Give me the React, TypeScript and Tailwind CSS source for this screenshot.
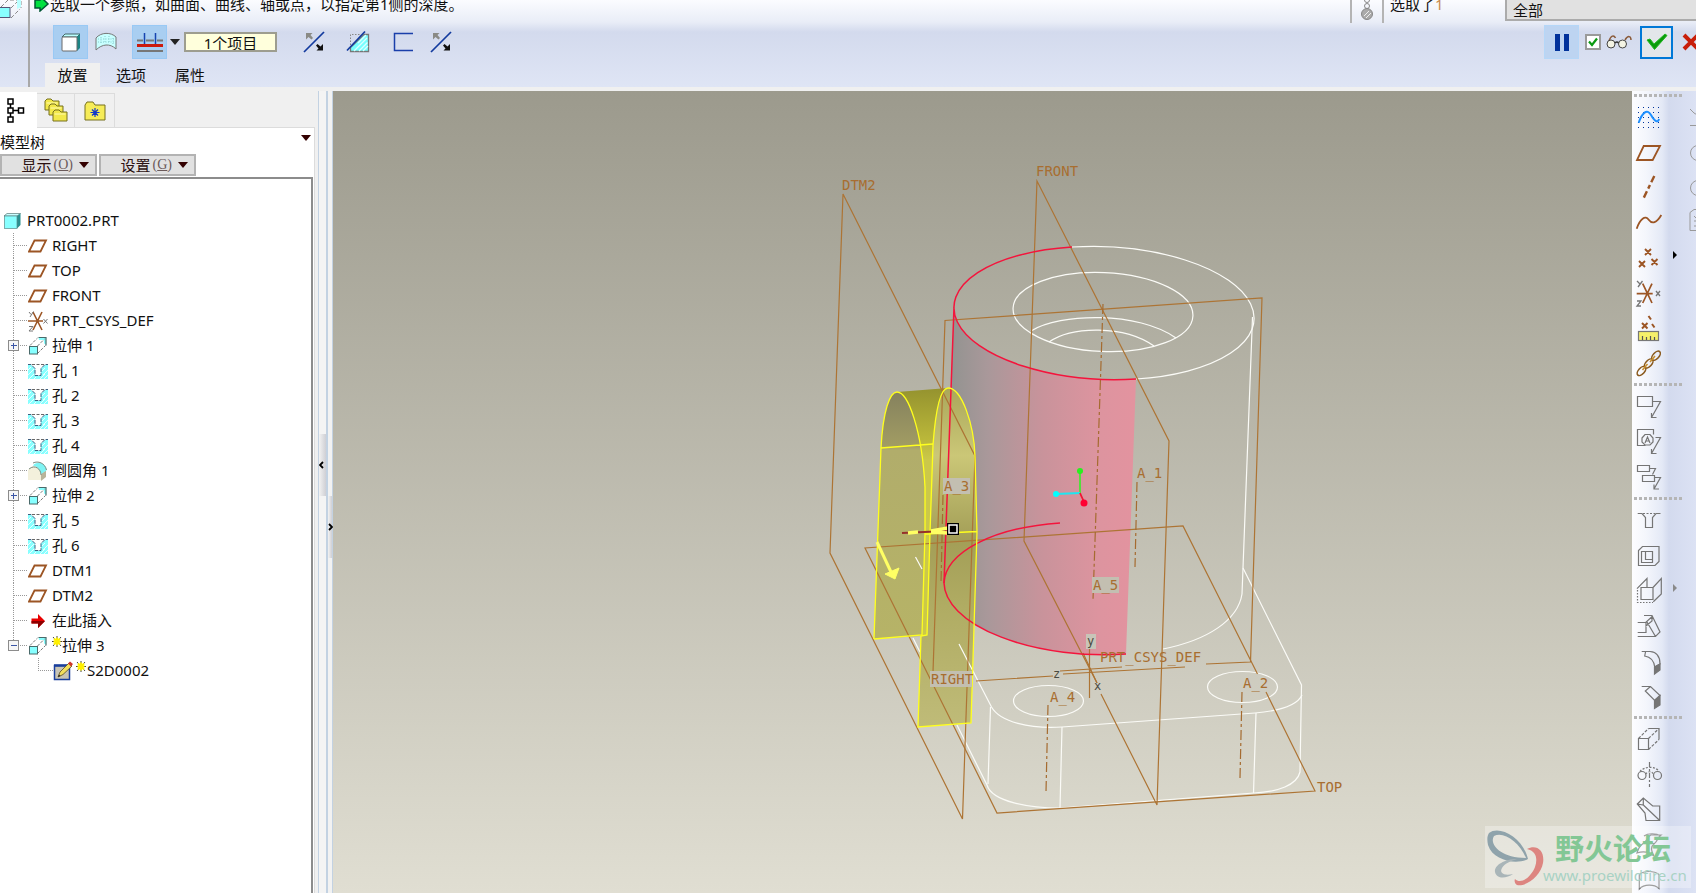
import type { ReactNode } from 'react';

const BROWN = '#9c5524';
const GRAY = '#757575';

type TreeItem = { icon: ReactNode; label: string; node?: 'plus' | 'minus'; fresh?: boolean };

/* ---------- tree icons ---------- */

function PlaneIcon() {
  return (
    <svg width="20" height="18" viewBox="0 0 20 18" fill="none">
      <path d="M6.500 3.500H18L12.500 14.500H1z" stroke={BROWN} strokeWidth="1.800" />
    </svg>
  );
}

function CsysIcon() {
  return (
    <svg width="20" height="22" viewBox="0 0 20 22" fill="none">
      <path d="M0 11H15M5 2L14 20M14 2L5 20" stroke={BROWN} strokeWidth="1.600" />
      <path d="M1 2l2 2.500M5.500 1.500L2 7M15.500 9l4 4.500M19.500 9l-4 4.500M1 16.500h4L1 21h4" stroke="#777" />
    </svg>
  );
}

function ExtrudeIcon() {
  return (
    <svg width="20" height="20" viewBox="0 0 20 20" fill="none">
      <path d="M10.500 1.500h7.500v7l-2-1V4h-5z" fill="#8ff" />
      <path d="M10.500 1.500h7.500v8" stroke="#4a6a6a" strokeWidth="1.200" />
      <path d="M2 9.500l7.500-7.500M9.500 17.500l8-8M9.500 10l7-7" stroke="#777" strokeDasharray="3 1.500" />
      <rect x="1.500" y="10.500" width="8" height="7.500" fill="#8ff" stroke="#4a6a6a" />
    </svg>
  );
}

function HoleIcon() {
  return (
    <svg width="20" height="16" viewBox="0 0 20 16" fill="none">
      <path d="M0 2h3l4 3.500V13h6V5.500L17 2h3v14H0z" fill="#8ff" />
      <path d="M0 7l3-3M0 12l6-6M1 16l6-6M6 16l2-2M12 16l5-5M16 16l4-4M14 8l3-3M15 12l5-5" stroke="#e8ffff" />
      <path d="M0 1.500h3l4 4V12.500h6V5.500l4-4h3" stroke="#3d5f80" strokeDasharray="4 1" />
      <path d="M4 1.500h12" stroke="#666" strokeDasharray="3 1.500" />
    </svg>
  );
}

function RoundIcon() {
  return (
    <svg width="20" height="20" viewBox="0 0 20 20" fill="none">
      <path d="M0 9l5-4c4 0 8 4 8 8v6H0z" fill="#f3f0dc" />
      <path d="M13 13l5-4v7l-5 4z" fill="#b9b49a" />
      <path d="M5 4.500C8 0 18 1 18.500 9.500L13 13C12 8 9 5.500 5 4.500z" fill="#7ff4f4" />
      <path d="M5 2C10-.5 17 2 18.500 9M1 8c6-5 12 0 12 6" stroke="#7a8a80" />
    </svg>
  );
}

function InsertIcon() {
  return (
    <svg width="20" height="16" viewBox="0 0 20 16">
      <path d="M3.500 5.500h6.500V1l7 7-7 7v-4.500H3.500z" fill="#e80000" />
      <path d="M3.500 8H17l-7 7v-4.500H3.500z" fill="#8d0000" />
    </svg>
  );
}

function SketchIcon() {
  return (
    <svg width="22" height="22" viewBox="0 0 22 22" fill="none">
      <rect x="1.500" y="5.500" width="15" height="14" fill="#c9c5b4" stroke="#1a3f9c" strokeWidth="1.500" />
      <path d="M1 5.500h16" stroke="#1a3f9c" strokeWidth="2.500" />
      <path d="M5 17l2-5 9-9 3 3-9 8.500z" fill="#f3e05c" stroke="#5a4a20" strokeWidth=".8" />
      <path d="M15 3.500l2-2 3 2.500-2 2.500z" fill="#d0362a" />
      <path d="M5 17l1-2.500 1.500 1.500z" fill="#222" />
    </svg>
  );
}

function PartIcon() {
  return (
    <svg width="17" height="16" viewBox="0 0 17 16">
      <path d="M0 3l3-2.500h13.500L13 3z" fill="#c9ffff" stroke="#5a7a7a" strokeWidth=".7" />
      <path d="M13 3l3.500-2.500V12L13 15.500z" fill="#2a8f8f" />
      <rect x=".5" y="3" width="12.500" height="12.500" fill="#8ff" stroke="#5a8a8a" strokeWidth=".7" />
    </svg>
  );
}

function Spark() {
  return (
    <svg width="10" height="11" viewBox="0 0 10 11" className="-mt-2 shrink-0">
      <path d="M5 0v11M0 5.500h10M1 1l8 9M9 1l-8 9" stroke="#444" />
      <path d="M5 1.500v8M1.500 5.500h7M2 2.500l6 6M8 2.500l-6 6" stroke="#fff000" strokeWidth="1.800" />
    </svg>
  );
}

const treeItems: TreeItem[] = [
  { icon: <PlaneIcon />, label: 'RIGHT' },
  { icon: <PlaneIcon />, label: 'TOP' },
  { icon: <PlaneIcon />, label: 'FRONT' },
  { icon: <CsysIcon />, label: 'PRT_CSYS_DEF' },
  { icon: <ExtrudeIcon />, label: '拉伸 1', node: 'plus' },
  { icon: <HoleIcon />, label: '孔 1' },
  { icon: <HoleIcon />, label: '孔 2' },
  { icon: <HoleIcon />, label: '孔 3' },
  { icon: <HoleIcon />, label: '孔 4' },
  { icon: <RoundIcon />, label: '倒圆角 1' },
  { icon: <ExtrudeIcon />, label: '拉伸 2', node: 'plus' },
  { icon: <HoleIcon />, label: '孔 5' },
  { icon: <HoleIcon />, label: '孔 6' },
  { icon: <PlaneIcon />, label: 'DTM1' },
  { icon: <PlaneIcon />, label: 'DTM2' },
  { icon: <InsertIcon />, label: '在此插入' },
  { icon: <ExtrudeIcon />, label: '拉伸 3', node: 'minus', fresh: true },
];

function Guide({ node, last }: { node?: 'plus' | 'minus'; last?: boolean }) {
  return (
    <svg width="28" height="25" viewBox="0 0 28 25" fill="none" className="shrink-0" shapeRendering="crispEdges">
      <path d={last ? 'M13.500 0V12' : 'M13.500 0V25'} stroke="#999" strokeDasharray="1 1" />
      <path d="M14 12.500H28" stroke="#999" strokeDasharray="1 1" />
      {node && (
        <>
          <rect x="8.500" y="7.500" width="10" height="10" rx="1" fill="#f6f6f6" stroke="#8c8c8c" />
          <path d={node === 'plus' ? 'M11 12.500h6M13.500 10v6' : 'M11 12.500h6'} stroke="#3a55a5" />
        </>
      )}
    </svg>
  );
}

/* ---------- right toolbar ---------- */

const dots = [4, 9, 14, 19, 24];

const datumTools: { name: string; art: ReactNode }[] = [
  {
    name: '草绘',
    art: (
      <>
        <g stroke="none" fill="#00329b" shapeRendering="crispEdges">
          {dots.map(x => dots.map(y => <rect key={`${x}-${y}`} x={x} y={y + 3} width="1" height="1" />))}
        </g>
        <path d="M4.700 22.700C8 13 13 8 17 15S24 23 25 19" stroke="#1e90ff" strokeWidth="2" />
      </>
    ),
  },
  { name: '平面', art: <path d="M9.700 11H26L18.700 25H3z" stroke={BROWN} strokeWidth="1.800" /> },
  { name: '轴', art: <path d="M20.300 6L8.700 30" stroke={BROWN} strokeWidth="2.400" strokeDasharray="7 3 4 3" /> },
  { name: '曲线', art: <path d="M2.700 23.700C6 13.700 11.300 10 14.700 14.700S22.700 18 27.300 10" stroke={BROWN} strokeWidth="1.800" /> },
  {
    name: '点',
    art: <path d="M11 9l6 6m0-6l-6 6M5 21l6 6m0-6l-6 6M17.500 19l6 6m0-6l-6 6" stroke={BROWN} strokeWidth="1.900" />,
  },
  {
    name: '坐标系',
    art: (
      <>
        <path d="M2.700 18.700h16M8.700 8.700l9.300 19.300M18 8.700L8.700 28" stroke={BROWN} strokeWidth="1.700" />
        <path d="M3 6l3 3M8.500 6L4 12M22 16l4 5M26 16l-4 5M3 26h4l-4 5h4" stroke={GRAY} strokeWidth="1.300" />
      </>
    ),
  },
  {
    name: '分析',
    art: (
      <>
        <path d="M8 13l5.500 5.500m0-5.500L8 18.500M14.500 6l2.500 3.500M18 14l2.500 3.500" stroke={BROWN} strokeWidth="2" />
        <rect x="4.500" y="21.500" width="20" height="9" fill="#f5f06a" stroke="#777" />
        <path d="M8.500 30v-4M12.500 30v-3M16.500 30v-4M20.500 30v-3" stroke="#555" />
      </>
    ),
  },
  {
    name: '参照',
    art: (
      <g stroke="#8a5a1e" strokeWidth="1.600">
        <ellipse cx="22" cy="10.700" rx="5.500" ry="3" transform="rotate(-48 22 10.700)" />
        <ellipse cx="14.700" cy="18.500" rx="5.500" ry="3" transform="rotate(-48 14.700 18.500)" />
        <ellipse cx="7.500" cy="26" rx="5.500" ry="3" transform="rotate(-48 7.500 26)" />
        <path d="M21 11l-5 6M13.500 19l-5 6" stroke="#c9902e" />
      </g>
    ),
  },
];

const noteTools: { name: string; art: ReactNode }[] = [
  {
    name: '注释',
    art: <path d="M3.500 7.500h15v10h-15zM18.500 12.500h8L17.500 28.500M17.500 24v4.500h5" />,
  },
  {
    name: '符号',
    art: (
      <>
        <path d="M19.500 10.500v-5h-16v16h8M21.500 13.500h5L17.500 29.500M17.500 25v4.500h5" />
        <path d="M8 14l3-3.500h5l3 3.500v4l-3 3h-5l-3-3zM11 19l2.500-6 2.500 6M12 17h3" />
      </>
    ),
  },
  {
    name: '传播',
    art: <path d="M3.500 6.500h12v6h-12zM8.500 16.500h12v6h-12zM15.500 9.500h6l-3 6M20.500 18.500h6L20 30M20 25.500v4.500h5" />,
  },
];

const featureTools: { name: string; art: ReactNode }[] = [
  {
    name: '孔',
    art: (
      <>
        <path d="M3.700 10.500H8L11.500 14.500v10h7v-10L22 10.500h4.500" />
        <path d="M9 10.500h12" strokeDasharray="2 1.500" />
      </>
    ),
  },
  {
    name: '壳',
    art: <path d="M4.500 27.500v-15l4-4h16.500v15l-4 4zM7.500 13.500h11v11h-11zM11.500 13.500v8h7" />,
  },
  {
    name: '筋',
    art: (
      <>
        <path d="M3 15.700L13 5.500V14.500M7 14.500h12v12H7zM19 14.500L27.300 5.500v15.500L19.300 28.700" />
        <path d="M3.500 17v12.500H19" strokeDasharray="1.500 1.500" />
      </>
    ),
  },
  {
    name: '拔模',
    art: <path d="M3.700 14.500h8l6-5.500M3.700 24.500H12v-7M3.700 28.500H21.500l4.500-4.500L18 7.500h-8M13 14l8.500 14.500M12 14v4l6-5V7.500" />,
  },
  {
    name: '倒圆角',
    art: (
      <>
        <path d="M7.700 8.500H16C23 9 26 14 26 21L20.700 24C20 18 17 14 10.700 13L11.500 9" />
        <path d="M20.500 24l5.500-3v6l-5.500 4z" fill={GRAY} />
      </>
    ),
  },
  {
    name: '倒角',
    art: (
      <>
        <path d="M7.700 8.500H16.500L26 17.500L20.700 22.500L11.300 13L16.500 8.500" />
        <path d="M20.500 22.500l5.500-5v9.500l-5.500 3.500z" fill={GRAY} />
      </>
    ),
  },
];

const shapeTools: { name: string; art: ReactNode }[] = [
  {
    name: '拉伸',
    art: (
      <>
        <path d="M4.500 16.500h10v11h-10zM14.500 6.500h10.500v11" />
        <path d="M4.500 16.500L14.500 6.500M14.500 16.500L25 6.500M14.500 27.500L25 17.500" strokeDasharray="3 1.500" />
      </>
    ),
  },
  {
    name: '旋转',
    art: (
      <>
        <circle cx="8" cy="18.500" r="4" />
        <circle cx="23.500" cy="18.500" r="4" />
        <path d="M15.500 5v25" strokeDasharray="5 2 2 2" />
        <path d="M6 14.500C10 9 22 9 25 14.500M11.500 17c3-3 6-3 8 0" strokeDasharray="2 1.500" />
      </>
    ),
  },
  {
    name: '扫描',
    art: <path d="M3.300 12L9.300 6L18.700 14H25.700V28.500H12L11 21zM3.300 12L9.300 13V6M9.300 13L25.700 28.500" />,
  },
  {
    name: '边界混合',
    art: <path d="M3 26C5 18 9 17 11 15C14 12 14 9 17 8H27C23 11 24 14 20 17S17 24 20 29C14 24 9 24 3 26zM10 9C14 6 22 6 27 9M11 15c4-1 6 0 9 2M14 16l-1 9" />,
  },
  { name: '造型', art: <path d="M5.300 27V12.500C10 8.500 20 8.500 25 12.500V26.500C20 22 10 22 5.300 27z" /> },
];

function ToolGroup({ tools, color }: { tools: { name: string; art: ReactNode }[]; color: string }) {
  return (
    <div className="flex flex-col">
      {tools.map(t => (
        <button key={t.name} aria-label={t.name} className="block h-[35px] w-[30px]">
          <svg width="30" height="35" viewBox="0 0 30 35" fill="none" stroke={color} strokeWidth="1.200">
            {t.art}
          </svg>
        </button>
      ))}
    </div>
  );
}

function Grip() {
  return (
    <div className="flex h-[9px] w-12 shrink-0 items-center">
      <div className="h-[3px] w-full bg-[repeating-linear-gradient(90deg,#b5b5b5_0_3px,transparent_3px_5px)]" />
    </div>
  );
}

function Flyout({ color }: { color: string }) {
  return (
    <svg width="6" height="8" viewBox="0 0 6 8">
      <path d="M1 0l4 4-4 4z" fill={color} />
    </svg>
  );
}

function RightToolbar() {
  return (
    <div className="flex w-16 shrink-0 overflow-hidden bg-[linear-gradient(90deg,#fdfdff_0,#f4f6fc_14px,#e4e9f6_30px,#d3daee_37px,#dce2f4_64px)]">
      <div className="flex w-[38px] shrink-0 flex-col pl-0.5">
        <Grip />
        <ToolGroup tools={datumTools} color={BROWN} />
        <Grip />
        <ToolGroup tools={noteTools} color={GRAY} />
        <Grip />
        <ToolGroup tools={featureTools} color={GRAY} />
        <Grip />
        <ToolGroup tools={shapeTools} color={GRAY} />
      </div>
      <div className="flex w-2 shrink-0 flex-col items-end pt-40">
        <Flyout color="#000" />
        <div className="h-[325px]" />
        <Flyout color="#8a8a8a" />
      </div>
      <svg width="24" height="140" viewBox="0 0 24 140" fill="none" stroke="#999" className="shrink-0">
        <path d="M12 18l4 4 5 3M12 34.500h9" />
        <circle cx="20" cy="62" r="7.500" />
        <circle cx="20" cy="97" r="7.500" />
        <path d="M24 118.500h-8l-4 3V139.500H24M16 125l3 3M16 130h6M16 135h6" />
      </svg>
    </div>
  );
}

/* ---------- header ---------- */

function FlipIcon() {
  return (
    <svg width="22" height="24" viewBox="0 0 22 24" fill="none">
      <path d="M1 22L21 2" stroke="#123a9e" strokeWidth="1.700" />
      <path d="M3 3h6.500L7.500 5l2.500 3-1.500 1.500L5.500 7 3 9.500z" fill="#8a8a85" />
      <path d="M20 20.500h-6.500l2-2-2.500-3 1.500-1.500 3 2.500L20 14z" fill="#111" />
    </svg>
  );
}

function Header() {
  return (
    <header className="flex h-[87px] shrink-0 overflow-hidden bg-[linear-gradient(180deg,#fbfcff_0,#e9edf7_22px,#d3daed_32px,#dfe5f5_87px)]">
      <div className="w-[30px] shrink-0 border-r-2 border-[#a8a8a8]">
        <svg width="22" height="19" viewBox="0 0 22 19" fill="none">
          <path d="M10 0h11v8M1 7L9-1M11 18l9-9M11 8l9-9" stroke="#888" strokeDasharray="4 2" />
          <path d="M17 0h4v7l-4 2z" fill="#bff" />
          <rect x="-1" y="7.500" width="11" height="10" fill="#8ff" stroke="#557" />
        </svg>
      </div>

      <div className="flex min-w-0 flex-1 flex-col">
        {/* Prompt line */}
        <div className="flex h-[23px] shrink-0 items-start">
          <svg width="20" height="12" viewBox="0 0 20 12" className="shrink-0">
            <path d="M5 0h5v-4l8 8-8 7V8H5z" fill="#00e040" stroke="#053" strokeWidth="1.500" />
          </svg>
          <p className="min-w-0 flex-1 whitespace-nowrap text-[15px] leading-[8px]">
            选取一个参照，如曲面、曲线、轴或点，以指定第1侧的深度。
          </p>
          <div className="flex h-[23px] w-8 shrink-0 justify-center border-l-2 border-[#b4b4b4]">
            <svg width="14" height="21" viewBox="0 0 14 21" fill="none" stroke="#888">
              <circle cx="7" cy="0" r="2.500" />
              <circle cx="7" cy="6" r="2.500" />
              <circle cx="7" cy="14" r="5.500" fill="#aaa" />
              <path d="M4 16l5-5M6 18l5-5" stroke="#eee" />
            </svg>
          </div>
          <p className="h-[23px] w-[123px] shrink-0 border-l-2 border-[#b4b4b4] pl-1.5 text-[15px] leading-[8px]">
            选取了<span className="text-[#c98a4a]">1</span>
          </p>
          <select
            aria-label="过滤器"
            className="-mr-4 h-[21px] w-[207px] shrink-0 appearance-none border-b-2 border-l-2 border-[#ababab] bg-[#e1e1e1] pl-1.5 text-[15px] leading-4"
          >
            <option>全部</option>
          </select>
        </div>

        {/* Feature options */}
        <div className="flex h-[38px] shrink-0 items-center pl-[23px]">
          <button aria-label="实体" className="flex h-[34px] w-[35px] items-center justify-center border border-[#99c9f5] bg-[#a9cef1]">
            <svg width="20" height="19" viewBox="0 0 20 19">
              <path d="M1 4l3-3h15l-3 3z" fill="#bff" stroke="#466" />
              <path d="M16 4l3-3v14l-3 3z" fill="#1d8585" />
              <rect x="1" y="4" width="15" height="14" rx="1" fill="#fff" stroke="#6a6a6a" />
            </svg>
          </button>
          <button aria-label="曲面" className="ml-1.5 flex w-6 justify-center">
            <svg width="22" height="20" viewBox="0 0 22 20">
              <path d="M1 18V6C6 0 16 0 21 5V17C15 11 7 12 1 18z" fill="#c8ffff" stroke="#777" />
              <path d="M3 7h16M3 10h16M6 5v7M10 4v7M14 4v7M18 6v7" stroke="#8cc" strokeDasharray="1 1.500" />
            </svg>
          </button>
          <button aria-label="对称深度" className="ml-3.5 flex h-[34px] w-[35px] items-center justify-center border border-[#99c9f5] bg-[#a9cef1]">
            <svg width="26" height="22" viewBox="0 0 26 22">
              <path d="M0 9.500h6M9 9.500h8M20 9.500h6M0 20h26" stroke="#777" strokeWidth="2" />
              <path d="M7.500 2v11M18.500 2v11" stroke="#1744b0" strokeWidth="1.500" />
              <path d="M0 14.500h26" stroke="#cc1a0c" strokeWidth="3" />
            </svg>
          </button>
          <button aria-label="深度选项" className="ml-[3px] flex w-2.5 justify-center">
            <svg width="10" height="6" viewBox="0 0 10 6"><path d="M0 0h10L5 6z" fill="#222" /></svg>
          </button>
          <input
            aria-label="参照收集器"
            defaultValue="1个项目"
            className="ml-1 h-5 w-[93px] border-2 border-[#9d9d8f] bg-[#ffffdc] text-center text-[15px] leading-4 outline-none"
          />
          <button aria-label="反向" className="ml-[26px]"><FlipIcon /></button>
          <button aria-label="移除材料" className="ml-[21px]">
            <svg width="24" height="24" viewBox="0 0 24 24" fill="none">
              <path d="M4.500 21.500V17.500L18 4.500h4.500v17z" fill="#7ff" stroke="#777" strokeWidth="1.300" />
              <path d="M8 21l13-13M13 21l8.500-8.500M17 21l5-5M12 13l8-8" stroke="#dff" strokeWidth="1.300" />
              <path d="M4.500 15V4.500H14" stroke="#888" strokeDasharray="1.500 1.500" />
              <path d="M1 20.500L19 1.500" stroke="#123a9e" strokeWidth="1.700" />
            </svg>
          </button>
          <button aria-label="加厚" className="ml-[23px]">
            <svg width="22" height="22" viewBox="0 0 22 22" fill="none">
              <path d="M20 2.500H1.500V19.500H20" stroke="#1a3faa" strokeWidth="1.500" />
            </svg>
          </button>
          <button aria-label="厚度反向" className="ml-[15px]"><FlipIcon /></button>

          <div className="flex-1" />

          <button aria-label="暂停" className="flex h-[34px] w-[35px] items-center justify-center gap-1 border border-[#b5d7f8] bg-[#bdd4f1]">
            <span className="h-[17px] w-[5px] bg-[#00329b]" />
            <span className="h-[17px] w-[5px] bg-[#00329b]" />
          </button>
          <label className="relative ml-1.5 flex items-center gap-1">
            <input type="checkbox" defaultChecked className="h-4 w-4 appearance-none border-2 border-[#9a9a9a] bg-white" />
            <svg width="16" height="16" viewBox="0 0 16 16" fill="none" className="pointer-events-none absolute left-0">
              <path d="M4 7.500l3 3.500 5-6.500" stroke="#0a9a12" strokeWidth="2.200" />
            </svg>
            <svg width="28" height="16" viewBox="0 0 28 16" fill="none" aria-label="预览">
              <path d="M4 7C6 1 9 1 10.500 4M20 6C23 1 26 2 26 6" stroke="#8a5a3a" strokeWidth="1.500" />
              <circle cx="6" cy="10" r="4" fill="#f4f4e4" stroke="#444" />
              <circle cx="17.500" cy="10" r="4" fill="#f4f4e4" stroke="#444" />
              <path d="M10 9q2-2 3.500 0" stroke="#333" strokeWidth="1.500" />
            </svg>
          </label>
          <button aria-label="确定" className="ml-[7px] flex h-[33px] w-[33px] items-center justify-center border-2 border-[#0078d7] bg-[#e3e6ea]">
            <svg width="24" height="20" viewBox="0 0 24 20" fill="none">
              <path d="M2 8l3-1 4 5L20 2l2 1.500-12.500 14z" fill="#0a9b0a" stroke="#23b823" />
            </svg>
          </button>
          <button aria-label="取消" className="ml-2 w-[15px] overflow-hidden">
            <svg width="20" height="20" viewBox="0 0 20 20">
              <path d="M3 3l14 14M17 3L3 17" stroke="#c81e0a" strokeWidth="4" />
            </svg>
          </button>
        </div>

        {/* Slide-up panel tabs */}
        <nav className="flex flex-1 items-stretch pt-0.5 pl-[15px] text-[15px]">
          <button className="w-[55px] bg-[#f0f0f0]">放置</button>
          <button className="w-[62px]">选项</button>
          <button className="w-14">属性</button>
        </nav>
      </div>
    </header>
  );
}

/* ---------- model tree ---------- */

function Folder({ x, y }: { x: number; y: number }) {
  return (
    <g transform={`translate(${x} ${y})`}>
      <path d="M0 2L2 0h4l2 2h6v9H0z" fill="#f2e84a" stroke="#77711f" />
      <path d="M1.500 4h11" stroke="#fffbb0" />
    </g>
  );
}

function ModelTree() {
  return (
    <aside className="flex w-[315px] shrink-0 flex-col">
      <div className="flex h-[37px] items-end border-b border-[#dcdcdc]">
        <button aria-label="模型树" className="-mb-px flex h-9 w-[37px] items-center bg-white pl-[7px]">
          <svg width="18" height="25" viewBox="0 0 18 25" fill="none" stroke="#000" strokeWidth="1.500">
            <path d="M1 1h5v5H1zM1 10h5v5H1zM1 19h5v5H1zM11.500 10h5v5h-5zM3.500 6v4M3.500 15v4M6 12.500h5.500" />
          </svg>
        </button>
        <button aria-label="文件夹浏览器" className="flex h-[34px] w-[38px] items-center justify-center border-t border-r border-[#dcdcdc]">
          <svg width="24" height="25" viewBox="0 0 24 25">
            <Folder x={1} y={1} />
            <Folder x={5} y={6} />
            <Folder x={9} y={12} />
          </svg>
        </button>
        <button aria-label="收藏夹" className="flex h-[34px] w-10 items-center justify-center border-t border-r border-[#dcdcdc]">
          <svg width="22" height="20" viewBox="0 0 22 20" fill="none">
            <path d="M1 4l2-3h6l2 3h10v15H1z" fill="#f6ec58" stroke="#77711f" />
            <path d="M11 7v9M6.500 11.500h9M8 8.500l6 6M14 8.500l-6 6" stroke="#1238c8" strokeWidth="1.200" />
          </svg>
        </button>
      </div>

      <div className="flex min-h-0 flex-1 flex-col border-r border-[#dcdcdc] bg-white">
        <div className="flex h-[26px] items-center justify-between pt-0.5 pr-[3px]">
          <h2 className="text-[15px]">模型树</h2>
          <button aria-label="导航器菜单" className="-mt-2">
            <svg width="10" height="6" viewBox="0 0 10 6"><path d="M0 0h10L5 6z" fill="#300" /></svg>
          </button>
        </div>
        <div className="flex gap-0.5 text-[15px] text-[#2b1010]">
          {[['显示', 'O'], ['设置', 'G']].map(([label, key]) => (
            <button key={key} className="flex h-[22px] w-[97px] items-center justify-end border-2 border-[#b3b3b3] bg-[#e1e1e1] pr-1.5">
              {label}
              <span className="ml-0.5 font-['Liberation_Serif'] text-sm text-[#6b5a5a]">
                (<u>{key}</u>)
              </span>
              <svg width="10" height="6" viewBox="0 0 10 6" className="ml-1.5"><path d="M0 0h10L5 6z" fill="#300" /></svg>
            </button>
          ))}
        </div>

        <div className="mt-px mr-px flex-1 overflow-hidden border-t-2 border-r-2 border-[#8c8c8c] pt-[29px]">
          <div className="flex h-[25px] items-center gap-1.5 pl-1 text-[15px]">
            <PartIcon />
            PRT0002.PRT
          </div>
          <ul className="text-[15px]">
            {treeItems.map((item, i) => (
              <li key={item.label} className="flex h-[25px] items-center">
                <Guide node={item.node} last={i === treeItems.length - 1} />
                <span className="flex w-6 shrink-0 items-center">{item.icon}</span>
                {item.fresh && <Spark />}
                {item.label}
              </li>
            ))}
            <li className="flex h-[25px] items-center pl-[38px]">
              <svg width="15" height="25" viewBox="0 0 15 25" fill="none" shapeRendering="crispEdges">
                <path d="M.5 0v12.500H15" stroke="#999" strokeDasharray="1 1" />
              </svg>
              <SketchIcon />
              <span className="w-px" />
              <Spark />
              <span className="pl-px">S2D0002</span>
            </li>
          </ul>
        </div>
      </div>
    </aside>
  );
}

function Sashes() {
  return (
    <div className="flex w-[18px] shrink-0 pl-[3px]">
      <div className="w-2 border-l border-[#c3d2e2] bg-[#f4f4f4]">
        <button aria-label="收起导航器" className="mt-[343px] flex h-[62px] w-[7px] items-center bg-[linear-gradient(90deg,#f2f2f2,#cfcfd4)]">
          <svg width="5" height="8" viewBox="0 0 5 8" fill="none"><path d="M4 1L1 4l3 3" stroke="#000" strokeWidth="1.800" /></svg>
        </button>
      </div>
      <div className="w-[7px] border-r border-l-2 border-[#c3d2e2] bg-[#f2f2f2]">
        <button aria-label="展开浏览器" className="mt-[405px] flex h-[62px] w-1 items-center bg-[linear-gradient(90deg,#f2f2f2,#cfcfd4)]">
          <svg width="5" height="8" viewBox="0 0 5 8" fill="none" className="shrink-0"><path d="M1 1l3 3-3 3" stroke="#000" strokeWidth="1.800" /></svg>
        </button>
      </div>
    </div>
  );
}

/* ---------- graphics window ---------- */

const labels = [
  { x: 842, y: 190, text: 'DTM2' },
  { x: 1036, y: 176, text: 'FRONT' },
  { x: 1317, y: 792, text: 'TOP' },
  { x: 1137, y: 478, text: 'A_1' },
  { x: 1243, y: 688, text: 'A_2' },
  { x: 1050, y: 702, text: 'A_4' },
  { x: 1100, y: 662, text: 'PRT_CSYS_DEF' },
  { x: 944, y: 491, text: 'A_3', w: 27 },
  { x: 1093, y: 590, text: 'A_5', w: 27 },
  { x: 931, y: 684, text: 'RIGHT', w: 42 },
];

function Viewport() {
  return (
    <main className="min-w-0 flex-1 bg-[linear-gradient(180deg,#9c9a8d,#e0ded2)]">
      <svg className="h-full w-full" viewBox="333 91 1299 802" preserveAspectRatio="xMidYMid slice" fill="none">
        <defs>
          <linearGradient id="face" gradientUnits="userSpaceOnUse" x1="950" x2="1136" y1="0" y2="0">
            <stop offset="0" stopColor="#929390" />
            <stop offset=".2" stopColor="#a9989a" />
            <stop offset=".5" stopColor="#c9939b" />
            <stop offset=".8" stopColor="#dd949f" />
            <stop offset="1" stopColor="#e3939f" />
          </linearGradient>
          <linearGradient id="arch" gradientUnits="userSpaceOnUse" x1="0" x2="0" y1="390" y2="460">
            <stop offset="0" stopColor="#96942f" />
            <stop offset=".7" stopColor="#bab73a" />
            <stop offset="1" stopColor="#cbc84a" />
          </linearGradient>
          <linearGradient id="back" gradientUnits="userSpaceOnUse" x1="0" x2="0" y1="392" y2="635">
            <stop offset="0" stopColor="#85815e" />
            <stop offset=".22" stopColor="#a19c63" />
            <stop offset=".24" stopColor="#b1ad6b" />
            <stop offset="1" stopColor="#b6b367" />
          </linearGradient>
          <linearGradient id="front" gradientUnits="userSpaceOnUse" x1="0" x2="0" y1="388" y2="725">
            <stop offset="0" stopColor="#aaa75a" />
            <stop offset=".2" stopColor="#cbc777" />
            <stop offset=".45" stopColor="#a39e57" />
            <stop offset=".65" stopColor="#b0ac63" />
            <stop offset="1" stopColor="#bfbb78" />
          </linearGradient>
        </defs>

        {/* Selected cylinder face */}
        <path d="M954 307A149.500 66 2.500 0 0 1136 379L1126 654A149 67 2.500 0 1 944 583z" fill="url(#face)" />

        {/* Extrude preview */}
        <path d="M897 392L948 388L935 430L931 533L927 635H922L925 487C920 440 908 392 897 392z" fill="url(#arch)" />
        <path d="M874 639L881 448C883 410 890 392 897 392C908 392 922 430 925 487V533L922 636z" fill="url(#back)" />
        <path d="M918 727L921 636L927 635L930 533L933 445C936 405 941 388 948 388C962 388 974 425 975 456L977 532L971 723z" fill="url(#front)" />

        {/* Solid edges */}
        <g stroke="#fbfbf7" strokeWidth="1.200">
          <path d="M1072 247A149.500 66 2.500 0 1 1136 379" />
          <ellipse cx="1103" cy="312" rx="90" ry="39.500" transform="rotate(2.500 1103 312)" />
          <path d="M1031 331C1060 313 1138 311 1176 338M1049 342C1072 326 1124 325 1154 346" />
          <path d="M1252.500 317L1243 568L1242 594C1238 620 1208 640 1163 649" />
          <path d="M1243 568L1301.500 685L1300 772C1297 785 1278 792 1254 793L1060 808C1030 808 992 802 987 785L957 725" />
          <path d="M959 644L991.500 707C1000 722 1030 729 1062 727L1255 713C1278 711 1297 706 1302 695" />
          <path d="M990.500 707L988 784M1062 727L1060 808M1256 713L1253.500 793M915.500 557L922 569M913 638L920 652" />
          <ellipse cx="1048.500" cy="701" rx="35" ry="15.500" />
          <ellipse cx="1242.500" cy="687" rx="35" ry="15.500" />
        </g>

        {/* Datum planes */}
        <g stroke="#ad7434" strokeWidth="1.200">
          <path d="M843 194L830 553L962.500 819L975 456z" />
          <path d="M1097 683L1024 541L1037 181L1169 441L1157 805L1101 694" />
          <path d="M933 672L945 320.500L1262 298L1250.500 662L1206 664M976 681L1053 676M1063 674L1185 667" />
          <path d="M1257.500 674L1183 526L865 548L997 813L1315 791L1266 692" />
          <path d="M1089.500 641V698M1083 653L1097 683M1060 671L1122 667" />
        </g>
        <g stroke="#a56b30" strokeWidth="1.200" strokeDasharray="10 3 3 3">
          <path d="M1103 304L1093 600M1137 482L1135 567M943 495L941 583M1048 705L1046 792M1242 692L1240 778" />
        </g>

        {/* Selected edges */}
        <g stroke="#f4143c" strokeWidth="1.500">
          <path d="M1072 247A149.500 66 2.500 0 0 1136 379M954 307L944 583" />
          <path d="M1060 523A149 67 2.500 0 0 944 583A149 67 2.500 0 0 1126 654" />
        </g>

        <g stroke="#ffff1e" strokeWidth="1.300">
          <path d="M874 639L881 448C883 410 890 392 897 392C908 392 922 430 925 487V533L922 635L874 639M881 448L933 444" />
          <path d="M918 727L921 636L927 635L930 533L933 445C936 405 941 388 948 388C962 388 974 425 975 456L977 532L971 723zM925 534L977 531.500" />
        </g>

        {/* Drag handles */}
        <path d="M902 533L946 531" stroke="#96302a" strokeWidth="2" />
        <path d="M908 533L918 532M931 531L948 528M931 532L948 533" stroke="#ffff64" strokeWidth="3.500" />
        <path d="M877 542L891 572" stroke="#ffff64" strokeWidth="3" />
        <path d="M885 574L899 568L895 579z" fill="#ffff64" stroke="#ffff64" />
        <rect x="947.500" y="523.500" width="11" height="11" fill="#000" stroke="#000" />
        <rect x="949" y="525" width="8" height="8" stroke="#fff" strokeWidth="1.500" />
        <circle cx="953" cy="529" r="3" fill="#000" />

        {/* Spin center */}
        <path d="M1080 493V471" stroke="#46e632" strokeWidth="1.800" />
        <path d="M1080 493L1056 494" stroke="#1ee6f0" strokeWidth="1.800" />
        <path d="M1080 493L1084 502" stroke="#f01432" strokeWidth="1.800" />
        <circle cx="1080" cy="471" r="3" fill="#28f01e" />
        <circle cx="1056" cy="494" r="3" fill="#0ff" />
        <circle cx="1084" cy="503" r="3.500" fill="#ff0032" />

        <g fontFamily="'DejaVu Sans Mono', monospace" fontSize="14" fill="#a86e30">
          {labels.map(l => (
            <g key={l.text}>
              {l.w && <rect x={l.x - 1} y={l.y - 13} width={l.w} height="16" fill="#c3bfb1" />}
              <text x={l.x} y={l.y}>{l.text}</text>
            </g>
          ))}
        </g>
        <rect x="1086" y="634" width="10" height="15" fill="#c8c5b8" />
        <g fontFamily="'DejaVu Sans Mono', monospace" fontSize="12" fill="#4a4a40">
          <text x="1087" y="645">y</text>
          <text x="1053" y="678">z</text>
          <text x="1094" y="690">x</text>
        </g>
      </svg>
    </main>
  );
}

function Watermark() {
  return (
    <div className="pointer-events-none absolute right-[5px] bottom-[5px] flex h-[62px] w-[206px] items-center bg-white/30">
      <svg width="60" height="60" viewBox="0 0 60 60" className="shrink-0">
        <path fillRule="evenodd" fill="#8fa3ab" d="M4 6C14-2 38 10 43 32C32 38 8 34 3 18C2 13 2 9 4 6zM9 9C4 16 14 31 41 31C34 14 18 4 9 9z" />
        <path d="M32 32C20 32 9 38 10 45C12 53 22 51 28 47C19 49 14 46 17 41C20 36 26 34 32 32z" fill="#a9b5b8" />
        <path fillRule="evenodd" fill="#dd8580" d="M42 22C52 17 60 24 58 36C56 48 42 60 32 58C30 57 29 54 30 52C36 58 46 50 50 40C53 31 51 24 42 22z" />
      </svg>
      <div className="-ml-0.5 whitespace-nowrap">
        <div className="pl-3 font-['Noto_Sans_CJK_SC'] text-[29px] leading-9 font-bold text-[#83c795]">野火论坛</div>
        <div className="font-['Noto_Sans'] text-[15px] leading-5 text-[#a9d2c4]">www.proewildfire.cn</div>
      </div>
    </div>
  );
}

export default function App() {
  return (
    <div className="relative flex h-screen flex-col overflow-hidden bg-[#f0f0f0] font-['Noto_Sans','Noto_Sans_CJK_SC',sans-serif] text-[#111]">
      <Header />
      <div className="flex min-h-0 flex-1 pt-1">
        <ModelTree />
        <Sashes />
        <Viewport />
        <RightToolbar />
      </div>
      <Watermark />
    </div>
  );
}
